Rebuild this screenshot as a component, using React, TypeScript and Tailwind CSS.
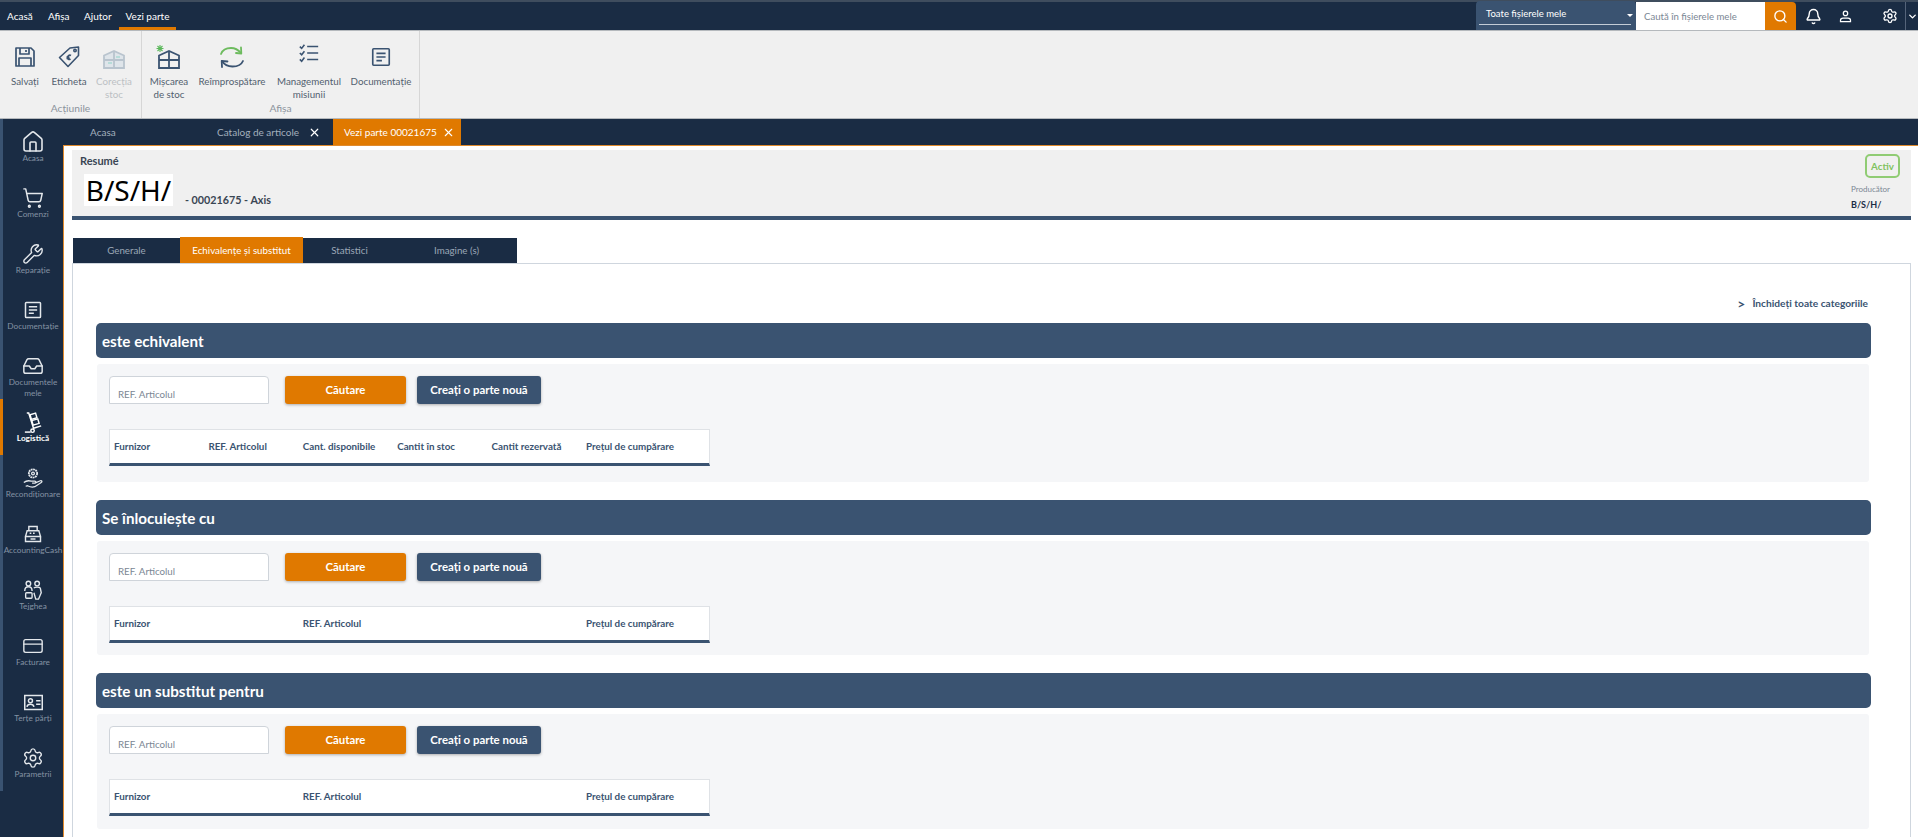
import type { ReactNode } from "react";
import {
  Bell,
  ChevronDown,
  CreditCard,
  Home,
  Inbox,
  Search,
  Settings,
  ShoppingCart,
  Wrench,
  X,
} from "lucide-react";

type SvgProps = { className?: string };

const SaveIcon = ({ className }: SvgProps) => (
  <svg viewBox="0 0 24 24" fill="none" stroke="currentColor" strokeWidth="1.700" strokeLinejoin="round" className={className}>
    <path d="M3 3h15l3 3v15H3z" />
    <path d="M7 3v6h9V3M13 5v2M6 21v-8h12v8" />
  </svg>
);

const DocIcon = ({ className }: SvgProps) => (
  <svg viewBox="0 0 24 24" fill="none" stroke="currentColor" strokeWidth="1.800" className={className}>
    <rect x="3" y="3" width="18" height="18" rx="1" />
    <path d="M7 8h10M7 12h10M7 16h6" />
  </svg>
);

const TagIcon = ({ className }: SvgProps) => (
  <svg viewBox="0 0 24 24" fill="none" stroke="currentColor" strokeWidth="1.600" strokeLinejoin="round" className={className}>
    <path d="M2.500 12.500 13 3l8.500-1v8.500L11 21.500z" />
    <circle cx="18" cy="5.500" r="1.200" />
    <path d="M14 10.500c-1.500-1-3.500 0-3.500 2s1.500 2.500 3 1.500M9.500 12h3M9.500 13.500h3" />
  </svg>
);

const WindowIcon = ({ className, plus, muted }: SvgProps & { plus?: boolean; muted?: boolean }) => (
  <svg viewBox="0 0 28 26" fill="none" className={className}>
    {plus && <path d="M5 1v7M1.500 4.500h7M2.500 2l5 5M7.500 2l-5 5" stroke="#5cb85c" strokeWidth="1.100" />}
    <path d="M4 24V11.500L14 7l10 4.500V24z" fill={muted ? "#dfe5ea" : "none"} stroke={muted ? "#b9c4ce" : "currentColor"} strokeWidth="1.800" />
    <path d="M14 7v17M4 16h20" stroke={muted ? "#b9c4ce" : "currentColor"} strokeWidth="1.800" />
    {muted && <path d="M8 19h4M16 13h4" stroke="#8fd3c8" strokeWidth="1.200" />}
  </svg>
);

const RefreshIcon = ({ className }: SvgProps) => (
  <svg viewBox="0 0 26 26" fill="none" strokeWidth="1.800" strokeLinecap="round" strokeLinejoin="round" className={className}>
    <path d="M2 10c1.500-4 5-6 10-6 4 0 7 1.500 10 5" stroke="#6dbb5e" />
    <path d="m22 3.500.3 6-5.300-.5" stroke="#6dbb5e" />
    <path d="M24 17c-1.500 3.500-5.500 5.500-10.500 5.500-4.500 0-8-1.500-10.500-5.500" stroke="#3a5371" />
    <path d="m3 23-.3-6 5.800.5" stroke="#3a5371" />
  </svg>
);

const MissionIcon = ({ className }: SvgProps) => (
  <svg viewBox="0 0 24 24" fill="none" stroke="currentColor" strokeWidth="1.700" className={className}>
    <path d="m2 5 2 2 3-4M2 12l2 2 3-4M2 19l2 2 3-4" />
    <path d="M10 5h12M10 12h12M10 19h12" />
  </svg>
);

const UserIcon = ({ className }: SvgProps) => (
  <svg viewBox="0 0 24 24" fill="none" stroke="currentColor" strokeWidth="2" className={className}>
    <circle cx="12" cy="7" r="3.500" />
    <path d="M4 20v-2c0-2 2-3.500 4-3.500h8c2 0 4 1.500 4 3.500v2z" />
  </svg>
);

const TruckIcon = ({ className }: SvgProps) => (
  <svg viewBox="0 0 24 24" fill="none" stroke="currentColor" strokeWidth="1.500" className={className}>
    <path d="M5 2h2l5 16 8-2.500" />
    <rect x="9" y="3" width="6" height="5" transform="rotate(-17 12 5.500)" />
    <rect x="10.800" y="9" width="6.500" height="5" transform="rotate(-17 14 11.500)" />
    <circle cx="11" cy="20.500" r="1.800" />
    <path d="M3 22h6" />
  </svg>
);

const ReconditionIcon = ({ className }: SvgProps) => (
  <svg viewBox="0 0 24 24" fill="none" stroke="currentColor" strokeWidth="1.400" className={className}>
    <circle cx="12" cy="7" r="4.500" strokeDasharray="2 .6" strokeWidth="2" />
    <circle cx="12" cy="7" r="1.500" />
    <path d="M2 17c3-2.500 5-2.500 8-1.500h4c1.500 0 1.500 2 0 2h-3M14 17.500l6-2.500c1.500-.5 2.500 1 1 2l-7 4.500c-3 1-6 0-8-1l-2 .5" />
  </svg>
);

const CashIcon = ({ className }: SvgProps) => (
  <svg viewBox="0 0 24 24" fill="none" stroke="currentColor" strokeWidth="1.700" className={className}>
    <path d="M7 3h10v5H7zM5 8h14l2 7H3zM3 15h18v6H3z" />
    <path d="M8 11h2M12 11h2M9 18h6" />
  </svg>
);

const PeopleIcon = ({ className }: SvgProps) => (
  <svg viewBox="0 0 24 24" fill="none" stroke="currentColor" strokeWidth="1.500" className={className}>
    <circle cx="7" cy="5" r="2.500" />
    <circle cx="16.500" cy="5" r="2.500" />
    <path d="M3 13c0-3 2-4.500 4-4.500s4 1.500 4 4.500M13 10c1-1.500 6-1.500 7 0l1 5-3 7h-3l-2-7" />
    <rect x="4" y="15" width="7" height="6" rx="1" />
  </svg>
);

const CardIdIcon = ({ className }: SvgProps) => (
  <svg viewBox="0 0 24 24" fill="none" stroke="currentColor" strokeWidth="1.700" className={className}>
    <rect x="2" y="4" width="20" height="16" />
    <circle cx="8.500" cy="10" r="2.300" />
    <path d="M4.500 17c.5-2.500 2-3 4-3s3.500.5 4 3M15 10h5M15 14h5" />
  </svg>
);

const RibbonButton = ({ icon, label, width, muted }: { icon: ReactNode; label: string; width: string; muted?: boolean }) => (
  <div className={`flex flex-col items-center ${width}`}>
    <div className={`flex h-[30px] items-center justify-center ${muted ? "text-[#b9c4ce]" : "text-[#3a5371]"}`}>{icon}</div>
    <div className={`mt-[3px] whitespace-pre-line text-center text-[9.750px] leading-[13px] ${muted ? "text-[#bcc0c4]" : "text-[#52606f]"}`}>
      {label}
    </div>
  </div>
);

const sideItems = [
  { label: "Acasa", icon: <Home size={24} strokeWidth={1.600} /> },
  { label: "Comenzi", icon: <ShoppingCart size={22} strokeWidth={1.600} /> },
  { label: "Reparație", icon: <Wrench size={22} strokeWidth={1.500} /> },
  { label: "Documentație", icon: <DocIcon className="size-[20px]" /> },
  { label: "Documentele mele", icon: <Inbox size={22} strokeWidth={1.600} /> },
  { label: "Logistică", icon: <TruckIcon className="size-[23px]" />, active: true },
  { label: "Recondiționare", icon: <ReconditionIcon className="size-[22px]" /> },
  { label: "AccountingCash", icon: <CashIcon className="size-[20px]" /> },
  { label: "Tejghea", icon: <PeopleIcon className="size-[22px]" /> },
  { label: "Facturare", icon: <CreditCard size={22} strokeWidth={1.500} /> },
  { label: "Terțe părți", icon: <CardIdIcon className="size-[21px]" /> },
  { label: "Parametrii", icon: <Settings size={22} strokeWidth={1.500} /> },
];

const detailTabs = [
  { label: "Generale", width: "w-[107px]" },
  { label: "Echivalențe și substitut", width: "w-[123px]", active: true },
  { label: "Statistici", width: "w-[93px]" },
  { label: "Imagine (s)", width: "w-[121px]" },
];

const fullColumns = ["Furnizor", "REF. Articolul", "Cant. disponibile", "Cantit în stoc", "Cantit rezervată", "Prețul de cumpărare"];
const shortColumns = ["Furnizor", "", "REF. Articolul", "", "", "Prețul de cumpărare"];

const sections = [
  { title: "este echivalent", columns: fullColumns, panel: "pb-[16px]" },
  { title: "Se înlocuiește cu", columns: shortColumns, panel: "pb-[12px]" },
  { title: "este un substitut pentru", columns: shortColumns, panel: "pb-[13px]" },
];

const Section = ({ title, columns, panel }: { title: string; columns: string[]; panel: string }) => (
  <div className="mb-[18px]">
    <div className="flex h-[35px] items-center rounded-[5px] bg-[#3a5371] px-[6px] pt-px text-[15.200px] font-bold text-white">{title}</div>
    <div className={`ml-px mr-[2px] mt-[6px] rounded-[3px] bg-[#f5f6f8] pl-[12px] pt-[12px] ${panel}`}>
      <div className="flex items-stretch">
        <div className="flex h-[28px] w-[160px] items-end rounded-t-[4px] border border-[#cfd4da] bg-white pb-[1px] pl-[8px] text-[9.750px] text-[#7b8794]">
          REF. Articolul
        </div>
        <button className="ml-[16px] h-[28px] w-[121px] rounded-[3px] bg-[#e07900] text-[11.400px] font-bold text-white shadow-[0_1px_3px_rgba(0,0,0,0.3)]">
          Căutare
        </button>
        <button className="ml-[11px] h-[28px] w-[124px] rounded-[3px] bg-[#3a5371] text-[11.400px] font-bold text-white shadow-[0_1px_3px_rgba(0,0,0,0.3)]">
          Creați o parte nouă
        </button>
      </div>
      <div className="mt-[25px] grid h-[37px] w-[601px] grid-cols-[repeat(6,94.400px)] items-center border border-b-[3px] border-[#dfe2e6] border-b-[#3a5371] bg-white pl-[4px] text-[9.800px] font-bold text-[#3a5371]">
        {columns.map((col, i) => (
          <span key={i} className="whitespace-nowrap">{col}</span>
        ))}
      </div>
    </div>
  </div>
);

export default function App() {
  return (
    <div className="flex h-screen flex-col overflow-hidden bg-white font-['Lato',sans-serif]">
      {/* Top menu */}
      <div className="flex h-[31px] shrink-0 border-t-2 border-b border-t-[#3f4d5e] border-b-[#b5b9bd] bg-[#1a2c44] text-[10px] text-white">
        <div className="flex items-center pl-[7px] pt-px">
          <span className="w-[41px]">Acasă</span>
          <span className="w-[36px]">Afișa</span>
          <span className="w-[35px]">Ajutor</span>
        </div>
        <div className="flex w-[57px] items-center justify-center border-b-[3px] border-[#e07900] pt-[3px]">Vezi parte</div>
        <div className="ml-auto flex">
          <div className="relative mt-[-1px] w-[160px] rounded-t-[4px] bg-[#3a5371] pl-[10px] pt-[5px]">
            <span className="text-[9.500px] text-white">Toate fișierele mele</span>
            <div className="absolute bottom-[5px] left-[3px] right-[5px] h-px bg-[#c3ccd6]" />
            <div className="absolute right-[3px] top-[13px] h-0 w-0 border-x-[3px] border-t-[3px] border-x-transparent border-t-white" />
          </div>
          <div className="flex w-[129px] items-center bg-white pl-[8px] pt-[3px] text-[9.600px] text-[#7b8794]">Caută în fișierele mele</div>
          <div className="flex w-[31px] items-center justify-center rounded-tr-[4px] bg-[#e07900]">
            <Search size={15} strokeWidth={2.200} />
          </div>
          <div className="flex w-[32px] items-center justify-center pl-[3px]"><Bell size={17} /></div>
          <div className="flex w-[32px] items-center justify-center pl-[3px]"><UserIcon className="size-[15px]" /></div>
          <div className="flex w-[45px] items-center justify-center pl-[14px]"><Settings size={16} /></div>
          <div className="flex w-[13px] items-center justify-center border-l border-[#55647a] bg-[#1a2c44]"><ChevronDown size={11} strokeWidth={3} /></div>
        </div>
      </div>

      {/* Ribbon */}
      <div className="flex h-[88px] shrink-0 border-b border-[#b5b9bd] bg-[#f0f0f0]">
        <div className="flex w-[142px] flex-col border-r border-[#d6d6d6]">
          <div className="flex flex-1 pl-[2px] pt-[11px]">
            <RibbonButton icon={<SaveIcon className="size-[24px]" />} label="Salvați" width="w-[46px]" />
            <RibbonButton icon={<TagIcon className="size-[24px]" />} label="Eticheta" width="w-[42px]" />
            <RibbonButton icon={<WindowIcon muted className="size-[28px]" />} label={"Corecția\nstoc"} width="w-[48px]" muted />
          </div>
          <div className="pb-[3px] text-center text-[10.250px] text-[#8b939c]">Acțiunile</div>
        </div>
        <div className="flex w-[278px] flex-col border-r border-[#d6d6d6]">
          <div className="flex flex-1 pl-[4px] pt-[11px]">
            <RibbonButton icon={<WindowIcon plus className="size-[28px]" />} label={"Mișcarea\nde stoc"} width="w-[46px]" />
            <RibbonButton icon={<RefreshIcon className="size-[26px]" />} label="Reîmprospătare" width="w-[80px]" />
            <RibbonButton icon={<MissionIcon className="mb-[8px] size-[22px]" />} label={"Managementul\nmisiunii"} width="w-[74px]" />
            <RibbonButton icon={<DocIcon className="size-[22px]" />} label="Documentație" width="w-[70px]" />
          </div>
          <div className="pb-[3px] text-center text-[10.250px] text-[#8b939c]">Afișa</div>
        </div>
      </div>

      <div className="flex min-h-0 flex-1">
        {/* Side nav */}
        <div className="w-[63px] shrink-0 bg-[#1a2c44]">
          <div className="border-l-[3px] border-[#3a5371]">
            {sideItems.map((item) => (
              <div
                key={item.label}
                className={`relative flex h-[56px] flex-col items-center pt-[11px] text-center ${item.active ? "text-white" : "text-[#e4e8ec]"}`}
              >
                {item.active && <div className="absolute bottom-0 left-[-3px] top-0 w-[3px] bg-[#e07900]" />}
                <div className="flex h-[24px] items-center justify-center">{item.icon}</div>
                <div className={`mt-[-1px] w-[60px] text-[8.250px] leading-[11px] ${item.active ? "font-bold" : "text-[#8492a3]"}`}>{item.label}</div>
              </div>
            ))}
          </div>
        </div>

        <div className="flex min-w-0 flex-1 flex-col">
          {/* Open tabs */}
          <div className="flex h-[26px] shrink-0 items-center bg-[#1a2c44] text-[10px] text-[#a3afbd]">
            <span className="ml-[27px] w-[127px]">Acasa</span>
            <span className="w-[91px] whitespace-nowrap">Catalog de articole</span>
            <X size={13} strokeWidth={2.200} className="text-white" />
            <div className="ml-[12px] flex h-[26px] w-[128px] items-center bg-[#e07900] pl-[11px] text-white">
              <span className="w-[98px] whitespace-nowrap">Vezi parte 00021675</span>
              <X size={13} strokeWidth={2} />
            </div>
          </div>

          <div className="flex min-h-0 flex-1 flex-col border-l border-t border-[#e08a2c] pl-[8px] pr-[7px] pt-[4px]">
            {/* Summary */}
            <div className="flex h-[70px] shrink-0 justify-between border-b-4 border-[#3a5371] bg-[#f0f0f0] pr-[11px]">
              <div className="pl-[8px] pt-[3px]">
                <div className="text-[11px] font-bold leading-[16px] text-[#3a4654]">Resumé</div>
                <div className="mt-[5px] flex items-end">
                  <div className="ml-[4px] flex h-[32px] w-[89px] items-center justify-center bg-white font-['Noto_Sans',sans-serif] text-[28px] leading-none text-black">B/S/H/</div>
                  <div className="mb-[-2px] ml-[12px] text-[10.750px] font-bold leading-[16px] text-[#3a4654]">- 00021675 - Axis</div>
                </div>
              </div>
              <div className="flex flex-col items-end pt-[4px]">
                <div className="flex h-[24px] w-[35px] items-center justify-center rounded-[5px] border-2 border-[#90cc74] text-[9.750px] font-bold text-[#7fc25f]">Activ</div>
                <div className="mr-[-1px] mt-[5px] w-[50px] text-[8px] leading-[12px] text-[#7b8794]">Producător</div>
                <div className="mr-[-1px] mt-[2px] w-[50px] text-[9px] font-bold leading-[15px] text-[#1a2c44]">B/S/H/</div>
              </div>
            </div>

            {/* Detail tabs */}
            <div className="ml-px mt-[18px] flex h-[25px] w-fit shrink-0 bg-[#1a2c44] text-[9.750px] text-[#9aa7b6]">
              {detailTabs.map((tab) => (
                <div
                  key={tab.label}
                  className={`flex items-center justify-center ${tab.width} ${tab.active ? "mt-[-1px] h-[26px] bg-[#e07900] text-white" : ""}`}
                >
                  {tab.label}
                </div>
              ))}
            </div>

            <div className="min-h-0 flex-1 border border-b-0 border-[#cfd6de] pl-[23px] pr-[39px]">
              <div className="flex h-[59px] items-end justify-end pb-[12px] pr-[3px] text-[10.200px] font-bold text-[#3a5371]">
                <span className="mr-[7px] text-[14px] leading-[15px] font-bold">&gt;</span>
                Închideți toate categoriile
              </div>
              {sections.map((section) => (
                <Section key={section.title} {...section} />
              ))}
            </div>
          </div>
        </div>
      </div>
    </div>
  );
}
